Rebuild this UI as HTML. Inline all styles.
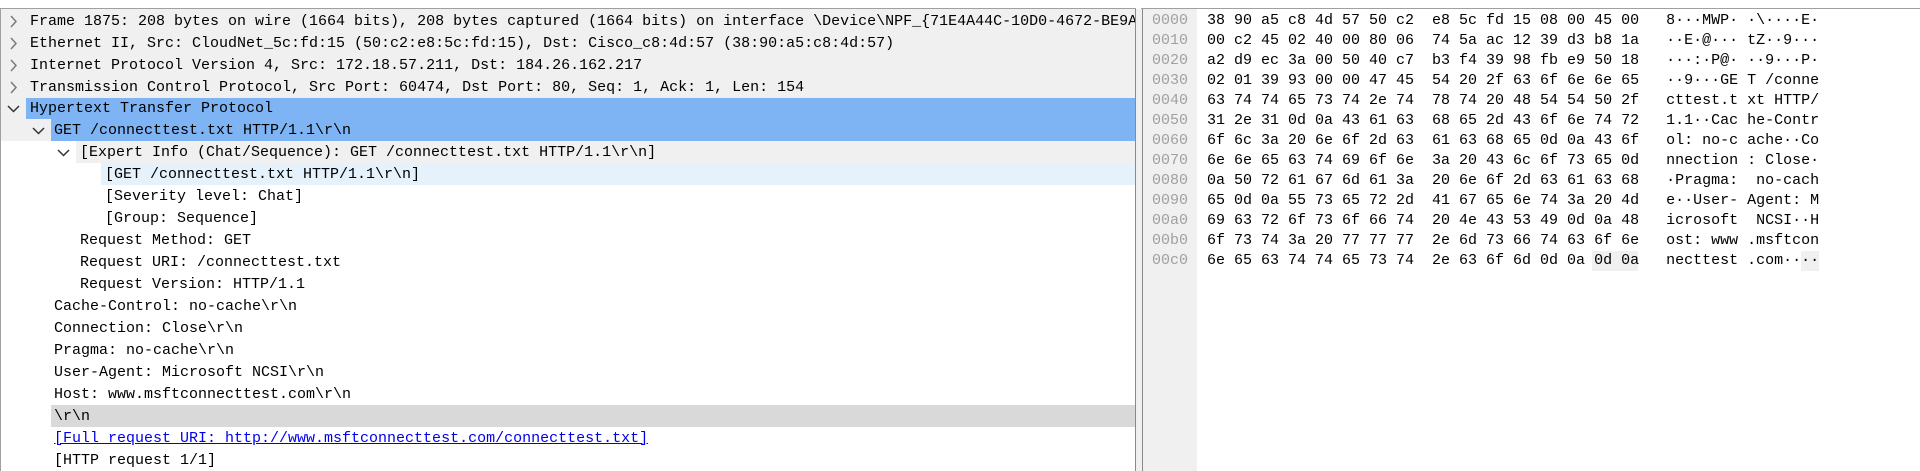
<!DOCTYPE html>
<html><head><meta charset="utf-8"><style>
body{margin:0;width:1920px;height:471px;background:#fff;position:relative;overflow:hidden;font-family:"Liberation Mono",monospace;font-size:15px;color:#000}
.r{position:absolute;height:22px;line-height:22px;white-space:pre}
.b{position:absolute}
.h{position:relative;height:20px;line-height:20px;white-space:pre}
svg{position:absolute}
</style></head><body>
<div class="b" style="left:0;top:8px;width:1136px;height:1px;background:#a0a0a0"></div>
<div class="b" style="left:1141px;top:8px;width:779px;height:1px;background:#a0a0a0"></div>
<div class="b" style="left:0;top:9px;width:1px;height:462px;background:#a0a0a0"></div>
<div class="b" style="left:1135px;top:9px;width:1px;height:462px;background:#8a8a8a"></div>
<div class="b" style="left:1142px;top:9px;width:1px;height:462px;background:#8a8a8a"></div>
<div class="b" style="left:1136px;top:9px;width:6px;height:462px;background:#f0f0f0"></div>
<div class="b" style="left:1px;top:9px;width:1134px;height:110px;background:#f0f0f0"></div>
<div class="b" style="left:26px;top:98px;width:1109px;height:21px;background:#7fb4f4"></div>
<div class="b" style="left:1px;top:119px;width:50px;height:22px;background:#f0f0f0"></div>
<div class="b" style="left:51px;top:119px;width:1084px;height:22px;background:#7fb4f4"></div>
<div class="b" style="left:76px;top:141px;width:1059px;height:22px;background:#f0f0f0"></div>
<div class="b" style="left:101px;top:163px;width:1034px;height:22px;background:#e5f1fb"></div>
<div class="b" style="left:51px;top:405px;width:1084px;height:22px;background:#d9d9d9"></div>
<svg width="120" height="160" style="left:0;top:0" fill="none" stroke-width="1.5">
<g stroke="#7a7a7a"><polyline points="11,16 16,21.5 11,27"/><polyline points="11,38 16,43.5 11,49"/><polyline points="11,60 16,65.5 11,71"/><polyline points="11,82 16,87.5 11,93"/></g>
<g stroke="#333"><polyline points="8,106 13.5,111.5 19,106"/><polyline points="33,128 38.5,133.5 44,128"/><polyline points="58,150 63.5,155.5 69,150"/></g>
</svg>
<div style="position:absolute;left:0;top:0;width:1135px;height:471px;overflow:hidden">
<div class="r" style="left:30px;top:11px">Frame 1875: 208 bytes on wire (1664 bits), 208 bytes captured (1664 bits) on interface \Device\NPF_{71E4A44C-10D0-4672-BE9A</div>
<div class="r" style="left:30px;top:33px">Ethernet II, Src: CloudNet_5c:fd:15 (50:c2:e8:5c:fd:15), Dst: Cisco_c8:4d:57 (38:90:a5:c8:4d:57)</div>
<div class="r" style="left:30px;top:55px">Internet Protocol Version 4, Src: 172.18.57.211, Dst: 184.26.162.217</div>
<div class="r" style="left:30px;top:77px">Transmission Control Protocol, Src Port: 60474, Dst Port: 80, Seq: 1, Ack: 1, Len: 154</div>
<div class="r" style="left:30px;top:98px">Hypertext Transfer Protocol</div>
<div class="r" style="left:54px;top:120px">GET /connecttest.txt HTTP/1.1\r\n</div>
<div class="r" style="left:80px;top:142px">[Expert Info (Chat/Sequence): GET /connecttest.txt HTTP/1.1\r\n]</div>
<div class="r" style="left:105px;top:164px">[GET /connecttest.txt HTTP/1.1\r\n]</div>
<div class="r" style="left:105px;top:186px">[Severity level: Chat]</div>
<div class="r" style="left:105px;top:208px">[Group: Sequence]</div>
<div class="r" style="left:80px;top:230px">Request Method: GET</div>
<div class="r" style="left:80px;top:252px">Request URI: /connecttest.txt</div>
<div class="r" style="left:80px;top:274px">Request Version: HTTP/1.1</div>
<div class="r" style="left:54px;top:296px">Cache-Control: no-cache\r\n</div>
<div class="r" style="left:54px;top:318px">Connection: Close\r\n</div>
<div class="r" style="left:54px;top:340px">Pragma: no-cache\r\n</div>
<div class="r" style="left:54px;top:362px">User-Agent: Microsoft NCSI\r\n</div>
<div class="r" style="left:54px;top:384px">Host: www.msftconnecttest.com\r\n</div>
<div class="r" style="left:54px;top:406px">\r\n</div>
<div class="r" style="left:54px;top:428px;color:#0000ee;text-decoration:underline">[Full request URI: http://www.msftconnecttest.com/connecttest.txt]</div>
<div class="r" style="left:54px;top:450px">[HTTP request 1/1]</div>
</div>
<div class="b" style="left:1143px;top:9px;width:54px;height:462px;background:#f0f0f0"></div>
<div class="b" style="left:1592px;top:251px;width:46px;height:20px;background:#f0f0f0"></div>
<div class="b" style="left:1801px;top:251px;width:18px;height:20px;background:#f0f0f0"></div>
<div style="position:absolute;left:1152px;top:11px;color:#a0a0a0">
<div class="h">0000</div><div class="h">0010</div><div class="h">0020</div><div class="h">0030</div><div class="h">0040</div><div class="h">0050</div><div class="h">0060</div><div class="h">0070</div><div class="h">0080</div><div class="h">0090</div><div class="h">00a0</div><div class="h">00b0</div><div class="h">00c0</div>
</div>
<div style="position:absolute;left:1207px;top:11px">
<div class="h">38 90 a5 c8 4d 57 50 c2  e8 5c fd 15 08 00 45 00   8···MWP· ·\····E·</div>
<div class="h">00 c2 45 02 40 00 80 06  74 5a ac 12 39 d3 b8 1a   ··E·@··· tZ··9···</div>
<div class="h">a2 d9 ec 3a 00 50 40 c7  b3 f4 39 98 fb e9 50 18   ···:·P@· ··9···P·</div>
<div class="h">02 01 39 93 00 00 47 45  54 20 2f 63 6f 6e 6e 65   ··9···GE T /conne</div>
<div class="h">63 74 74 65 73 74 2e 74  78 74 20 48 54 54 50 2f   cttest.t xt HTTP/</div>
<div class="h">31 2e 31 0d 0a 43 61 63  68 65 2d 43 6f 6e 74 72   1.1··Cac he-Contr</div>
<div class="h">6f 6c 3a 20 6e 6f 2d 63  61 63 68 65 0d 0a 43 6f   ol: no-c ache··Co</div>
<div class="h">6e 6e 65 63 74 69 6f 6e  3a 20 43 6c 6f 73 65 0d   nnection : Close·</div>
<div class="h">0a 50 72 61 67 6d 61 3a  20 6e 6f 2d 63 61 63 68   ·Pragma:  no-cach</div>
<div class="h">65 0d 0a 55 73 65 72 2d  41 67 65 6e 74 3a 20 4d   e··User- Agent: M</div>
<div class="h">69 63 72 6f 73 6f 66 74  20 4e 43 53 49 0d 0a 48   icrosoft  NCSI··H</div>
<div class="h">6f 73 74 3a 20 77 77 77  2e 6d 73 66 74 63 6f 6e   ost: www .msftcon</div>
<div class="h">6e 65 63 74 74 65 73 74  2e 63 6f 6d 0d 0a 0d 0a   necttest .com····</div>
</div>
</body></html>
